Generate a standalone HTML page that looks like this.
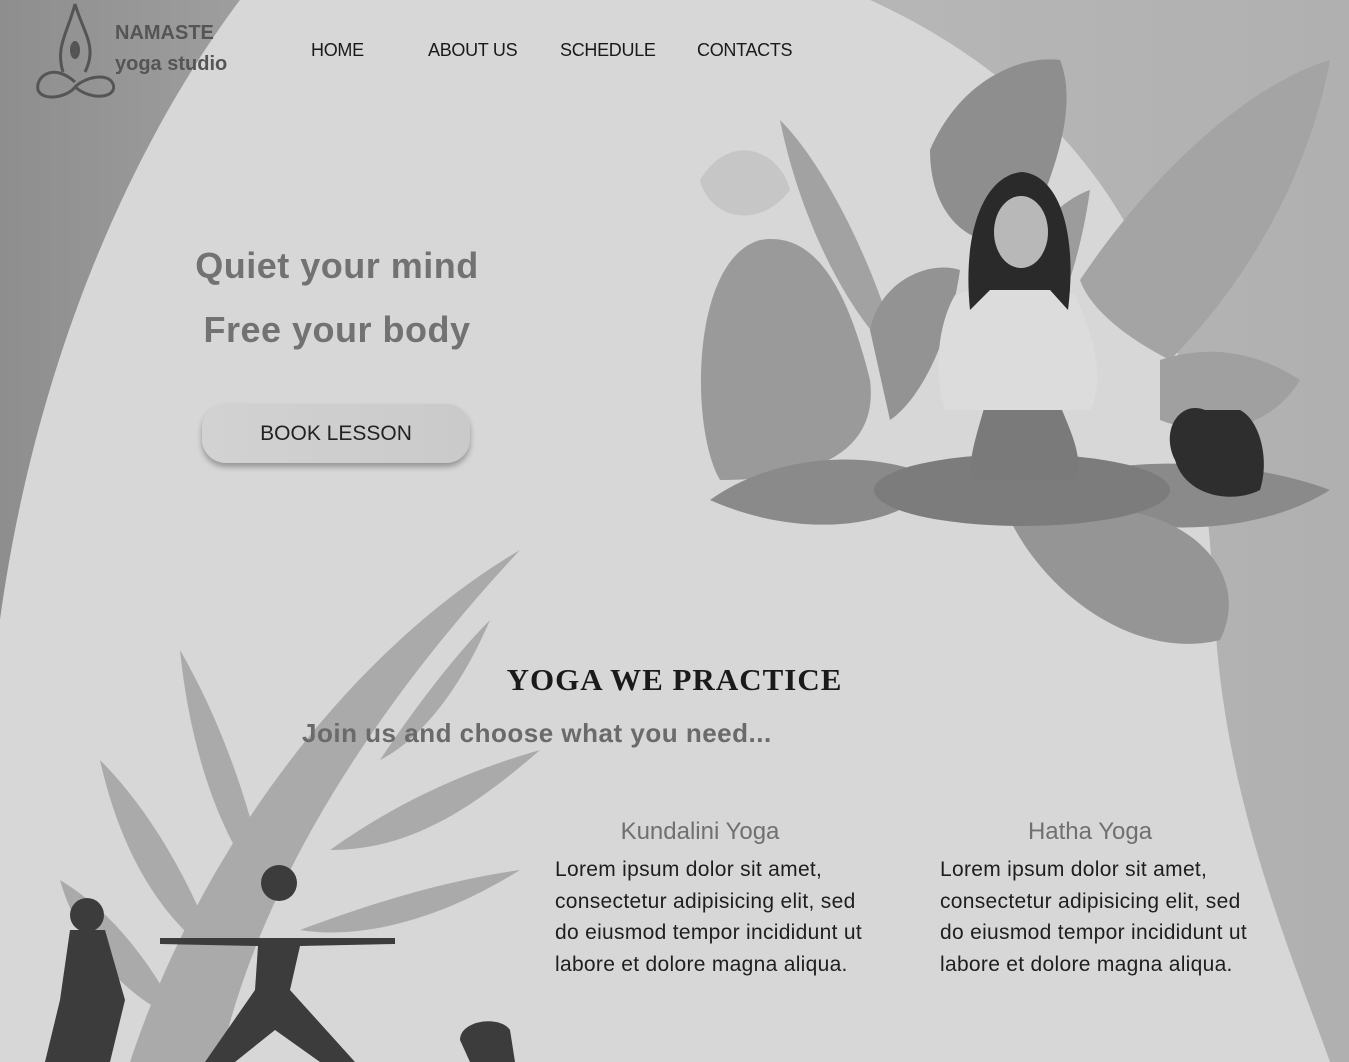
<!DOCTYPE html>
<html><head><meta charset="utf-8"><style>
*{margin:0;padding:0;box-sizing:border-box}
body{width:1349px;height:1062px;overflow:hidden;position:relative;background:#d6d6d6;font-family:"Liberation Sans",sans-serif}
svg.bg{position:absolute;left:0;top:0}
.abs{position:absolute}
.nav a{position:absolute;top:40px;font-size:18px;color:#1a1a1a;text-decoration:none;letter-spacing:-0.3px}
.hero{font-weight:bold;color:#727272;font-size:36px;width:400px;text-align:center;left:137px;letter-spacing:0.5px}
.btn{left:202px;top:404px;width:268px;height:59px;border-radius:24px;background:linear-gradient(90deg,#d2d2d2,#cacaca);box-shadow:0 4px 6px rgba(0,0,0,.3);font-size:21px;color:#222;text-align:center;line-height:59px}
.h2{left:0;width:1349px;text-align:center;top:662px;font-size:31px;font-weight:bold;color:#1a1a1a;letter-spacing:1px;font-family:"Liberation Serif",serif}
.sub{left:302px;top:718px;font-size:26px;font-weight:bold;color:#6a6a6a;letter-spacing:0.5px}
.card h3{font-size:24px;font-weight:normal;color:#707070;text-align:center;width:330px;margin-bottom:8px}
.card p{font-size:21px;line-height:31.5px;color:#1e1e1e;width:360px;white-space:nowrap;letter-spacing:0.3px}
</style></head><body>
<svg class="bg" width="1349" height="1062" viewBox="0 0 1349 1062">
<defs>
<linearGradient id="rg" x1="0" x2="1"><stop offset="0" stop-color="#c2c2c2"/><stop offset="1" stop-color="#b0b0b0"/></linearGradient>
<linearGradient id="lg" x1="0" x2="1"><stop offset="0" stop-color="#8e8e8e"/><stop offset="1" stop-color="#9e9e9e"/></linearGradient>
</defs>
<rect width="1349" height="1062" fill="url(#rg)"/>
<path d="M0 0H240C150 120 40 330 0 620Z" fill="url(#lg)"/>
<path d="M240 0H870C980 50 1080 130 1140 250C1200 380 1210 520 1215 620C1225 800 1290 950 1330 1062H0V620C40 330 150 120 240 0Z" fill="#d7d7d7"/>
<g fill="#9a9a9a">
<path d="M760 240C690 260 690 430 720 480C800 480 880 460 870 380C850 300 820 230 760 240Z"/>
<path d="M930 150C960 80 1020 55 1060 60C1080 110 1050 180 1030 230C990 260 930 230 930 150Z" fill="#8e8e8e"/>
<path d="M990 300C1020 240 1060 200 1090 190C1080 260 1060 320 1030 360Z" fill="#9c9c9c"/>
<path d="M710 500C780 450 880 450 940 480C900 530 800 540 710 500Z" fill="#8a8a8a"/>
<path d="M1020 490C1120 450 1250 460 1330 490C1250 540 1120 540 1020 490Z" fill="#8a8a8a"/>
<path d="M1010 520C1050 600 1140 660 1220 640C1250 580 1200 520 1120 510Z" fill="#959595"/>
<path d="M1080 280C1160 160 1260 80 1330 60C1310 170 1250 280 1170 360C1130 340 1090 310 1080 280Z" fill="#a4a4a4"/>
<path d="M780 120C830 170 880 280 900 360C850 320 800 220 780 120Z" fill="#a2a2a2"/>
<path d="M1160 360C1220 340 1270 360 1300 380C1270 430 1210 440 1160 420Z" fill="#a0a0a0"/>
<path d="M870 330C880 280 930 260 960 270C950 340 920 400 890 420Z" fill="#939393"/>
</g>
<path d="M700 180C730 130 780 150 790 190C760 230 710 220 700 180Z" fill="#c6c6c6"/>
<ellipse cx="1022" cy="490" rx="148" ry="36" fill="#7c7c7c"/>
<path d="M985 405C975 440 965 470 975 480H1075C1085 460 1070 430 1060 405Z" fill="#7a7a7a"/>
<path d="M955 295C985 285 1055 285 1075 295C1095 340 1105 380 1090 410H945C935 380 935 330 955 295Z" fill="#dcdcdc"/>
<path d="M970 310C962 230 985 175 1022 172C1058 175 1078 230 1068 310L1050 290H990Z" fill="#2a2a2a"/>
<ellipse cx="1021" cy="232" rx="27" ry="36" fill="#b8b8b8"/>
<path d="M1205 410C1180 400 1160 430 1175 460C1185 495 1230 505 1260 490C1270 460 1260 420 1240 410Z" fill="#2e2e2e"/>
<g fill="#aaaaaa">
<path d="M130 1062C200 850 350 650 520 550C380 700 260 880 220 1062Z"/>
<path d="M60 880C80 950 130 1000 180 1020C150 960 110 910 60 880Z"/>
<path d="M100 760C120 850 160 920 220 960C190 880 150 810 100 760Z"/>
<path d="M180 650C190 750 220 840 270 900C250 800 220 720 180 650Z"/>
<path d="M300 930C380 900 450 880 520 870C440 920 360 940 300 930Z"/>
<path d="M330 850C400 800 470 770 540 750C460 820 400 850 330 850Z"/>
<path d="M380 760C420 700 460 650 490 620C460 690 420 740 380 760Z"/>
</g>
<g fill="#3c3c3c">
<circle cx="87" cy="915" r="17"/>
<path d="M70 930H105L125 1000L110 1062H45L60 1000Z"/>
<circle cx="279" cy="883" r="18"/>
<path d="M160 938L395 938L395 944L300 946L290 990L355 1062H320L275 1030L235 1062H205L255 990L258 946L160 944Z"/>
<path d="M460 1040C460 1020 500 1015 510 1030L515 1062H470Z"/>
</g>
</svg>
<svg class="abs" style="left:33px;top:2px" width="85" height="100" viewBox="0 0 85 100">
<g fill="none" stroke="#555" stroke-width="3">
<path d="M42 2C50 30 65 45 52 70M42 2C35 30 22 45 30 70"/>
<path d="M42 80C20 60 2 75 5 88C10 100 35 95 42 85C52 75 75 70 80 82C85 95 60 100 42 85"/>
</g>
<ellipse cx="42" cy="48" rx="5" ry="9" fill="#555"/>
</svg>
<div class="abs" style="left:115px;top:22px;font-size:20px;font-weight:bold;color:#555">NAMASTE</div>
<div class="abs" style="left:115px;top:53px;font-size:20px;font-weight:bold;color:#555">yoga studio</div>
<div class="nav"><a style="left:311px">HOME</a><a style="left:428px">ABOUT US</a><a style="left:560px">SCHEDULE</a><a style="left:697px">CONTACTS</a></div>
<div class="abs hero" style="top:245px">Quiet your mind</div>
<div class="abs hero" style="top:309px">Free your body</div>
<div class="abs btn">BOOK LESSON</div>
<div class="abs h2">YOGA WE PRACTICE</div>
<div class="abs sub">Join us and choose what you need...</div>
<div class="abs card" style="left:555px;top:818px"><h3 style="margin-left:-20px">Kundalini Yoga</h3><p>Lorem ipsum dolor sit amet,<br>consectetur adipisicing elit, sed<br>do eiusmod tempor incididunt ut<br>labore et dolore magna aliqua.</p></div>
<div class="abs card" style="left:940px;top:818px"><h3 style="margin-left:-15px">Hatha Yoga</h3><p>Lorem ipsum dolor sit amet,<br>consectetur adipisicing elit, sed<br>do eiusmod tempor incididunt ut<br>labore et dolore magna aliqua.</p></div>
</body></html>
